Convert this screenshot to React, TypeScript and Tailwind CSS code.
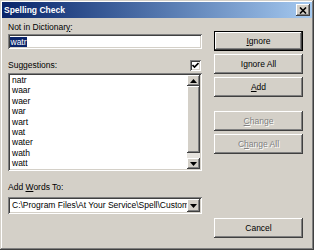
import React from "react";

const raised =
  "shadow-[inset_-1px_-1px_#404040,inset_1px_1px_#ffffff,inset_-2px_-2px_#808080,inset_2px_2px_#d4d0c8]";
const sunken =
  "shadow-[inset_1px_1px_#808080,inset_-1px_-1px_#ffffff,inset_2px_2px_#404040,inset_-2px_-2px_#d4d0c8]";

function U({ children }: { children: React.ReactNode }) {
  return <span className="underline underline-offset-[1px]">{children}</span>;
}

function Btn({
  children,
  def,
  disabled,
  className = "",
}: {
  children: React.ReactNode;
  def?: boolean;
  disabled?: boolean;
  className?: string;
}) {
  return (
    <div
      className={`h-[20px] w-[89px] ${def ? "border border-black" : ""} ${className}`}
    >
      <div
        className={`h-full w-full bg-[#d4d0c8] ${raised} flex items-center justify-center ${
          disabled ? "text-[#808080] [text-shadow:1px_1px_#ffffff]" : "text-black"
        }`}
      >
        {children}
      </div>
    </div>
  );
}

function Arrow({ up }: { up?: boolean }) {
  return (
    <svg width="7" height="4" viewBox="0 0 7 4">
      {up ? (
        <path d="M3.5 0 L7 4 L0 4 Z" fill="#000" />
      ) : (
        <path d="M0 0 L7 0 L3.5 4 Z" fill="#000" />
      )}
    </svg>
  );
}

export default function App() {
  const words = ["natr", "waar", "waer", "war", "wart", "wat", "water", "wath", "watt"];
  return (
    <div className="w-[314px] h-[250px] bg-[#d4d0c8] overflow-hidden font-['Liberation_Sans',Arial,sans-serif] text-[8.5px] text-black shadow-[inset_-1px_-1px_#404040,inset_1px_1px_#d4d0c8,inset_-2px_-2px_#808080,inset_2px_2px_#ffffff] p-[2px] flex flex-col">
      {/* Title bar */}
      <div className="h-[16px] shrink-0 bg-gradient-to-r from-[#0a246a] to-[#a6caf0] flex items-center pl-[2px] pr-[2px]">
        <span className="text-white font-bold text-[8.5px] leading-none flex-1">Spelling Check</span>
        <div className={`w-[14px] h-[12px] bg-[#d4d0c8] ${raised} flex items-center justify-center`}>
          <svg width="8" height="7" viewBox="0 0 8 7">
            <path d="M1 0.5 L7 6.5 M7 0.5 L1 6.5" stroke="#000" strokeWidth="1.6" />
          </svg>
        </div>
      </div>

      {/* Body */}
      <div className="flex pl-[6px]">
        {/* Left column */}
        <div className="w-[194px] flex flex-col">
          <div className="mt-[3px] h-[13px] leading-[13px]">
            Not in Dictionar<U>y</U>:
          </div>
          <div className={`h-[15px] bg-white ${sunken} flex items-center pl-[2px]`}>
            <span className="bg-[#0a246a] text-white leading-[10px] px-[0.5px]">watr</span>
          </div>
          <div className="mt-[9px] h-[15px] flex items-center justify-between">
            <span className="leading-[13px]">Suggestions:</span>
            <div className={`w-[11px] h-[11px] bg-white ${sunken} flex items-center justify-center mr-[1px]`}>
              <svg width="7" height="7" viewBox="0 0 7 7">
                <path d="M0.5 3 L2.5 5 L6.5 1" stroke="#000" strokeWidth="1.6" fill="none" />
              </svg>
            </div>
          </div>
          <div className={`h-[98px] bg-white ${sunken} p-[2px] flex`}>
            <div className="flex-1 pl-[2px] pt-[0px] overflow-hidden">
              {words.map((w) => (
                <div key={w} className="leading-[10.4px] h-[10.4px]">
                  {w}
                </div>
              ))}
            </div>
            <div className="w-[13px] flex flex-col bg-[#e6e3de]">
              <div className={`h-[11px] bg-[#d4d0c8] ${raised} flex items-center justify-center`}>
                <Arrow up />
              </div>
              <div className={`h-[67px] bg-[#d4d0c8] ${raised}`} />
              <div className="flex-1" />
              <div className={`h-[11px] bg-[#d4d0c8] ${raised} flex items-center justify-center`}>
                <Arrow />
              </div>
            </div>
          </div>
          <div className="mt-[10px] h-[13px] leading-[13px]">
            Add <U>W</U>ords To:
          </div>
          <div className={`mt-[3px] h-[17px] bg-white ${sunken} flex items-center p-[2px]`}>
            <div className="flex-1 overflow-hidden whitespace-nowrap pl-[2px] leading-[13px]">
              C:\Program Files\At Your Service\Spell\Custom.dic
            </div>
            <div className={`w-[13px] h-[13px] bg-[#d4d0c8] ${raised} flex items-center justify-center shrink-0`}>
              <Arrow />
            </div>
          </div>
        </div>

        {/* Right column */}
        <div className="ml-[12px] flex flex-col pt-[13px]">
          <Btn def>
            <U>I</U>gnore
          </Btn>
          <Btn className="mt-[3px]">
            I<U>g</U>nore All
          </Btn>
          <Btn className="mt-[3px]">
            <U>A</U>dd
          </Btn>
          <Btn disabled className="mt-[14px]">
            <U>C</U>hange
          </Btn>
          <Btn disabled className="mt-[3px]">
            C<U>h</U>ange All
          </Btn>
          <Btn className="mt-[64px]">Cancel</Btn>
        </div>
      </div>
    </div>
  );
}
